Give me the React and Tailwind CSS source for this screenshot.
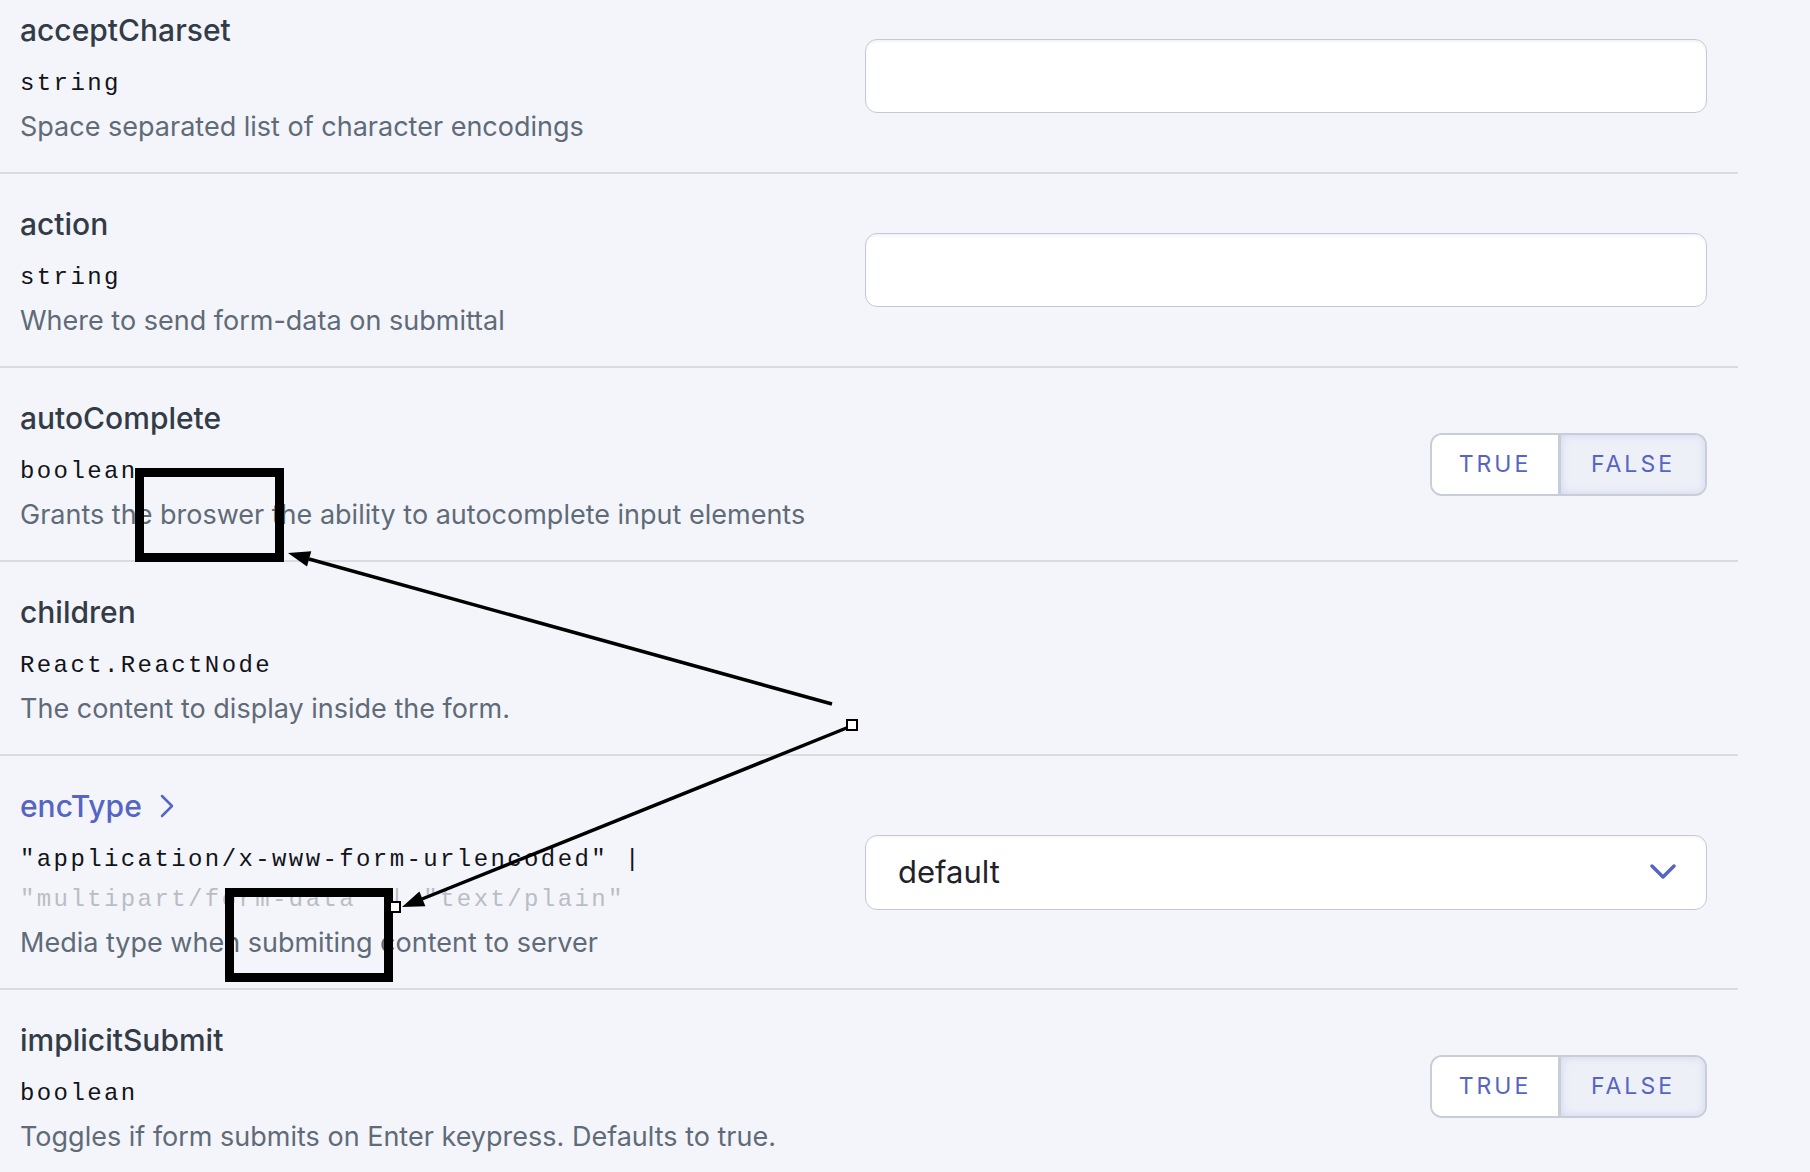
import React from 'react';

const sans = { fontFamily: 'Inter, "Open Sans", sans-serif' };

function TextInput() {
    return (
        <div className="w-full h-[74px] rounded-[12px] border-[1.5px] border-[#c3cad5] bg-white shadow-[inset_0_2px_3px_rgba(0,0,0,0.05)]"></div>
    );
}

function BoolToggle() {
    return (
        <div className="flex h-[63px] rounded-[12px] border-2 border-[#c8ced8] overflow-hidden text-[23px] tracking-[3px] text-[#5664c4]">
            <div className="w-[129px] flex items-center justify-center bg-white border-r-[3px] border-[#c8ced8]">TRUE</div>
            <div className="w-[144px] flex items-center justify-center bg-[#eef0f8] shadow-[inset_0_0_10px_rgba(88,101,198,0.2)]">FALSE</div>
        </div>
    );
}

function SelectBox() {
    return (
        <div className="w-full h-[75px] rounded-[12px] border-[1.5px] border-[#c3cad5] bg-white flex items-center justify-between pl-[32px] pr-[30px] shadow-[inset_0_2px_3px_rgba(0,0,0,0.04)]">
            <span className="text-[31px] text-[#1f2329]">default</span>
            <svg width="26" height="16" viewBox="0 0 26 16" fill="none">
                <path d="M2 2 L13 13 L24 2" stroke="#5664c4" strokeWidth="3.5" strokeLinecap="round" strokeLinejoin="round" />
            </svg>
        </div>
    );
}

function Row({ name, link, type, type2, desc, control }) {
    return (
        <div className="grid grid-cols-[865px_842px] w-[1738px] border-b-2 border-[#d9dbe0]">
            <div className="pl-5 pt-[30px] pb-[25px]">
                {link ? (
                    <div className="h-10 leading-10 text-[30px] font-medium text-[#5664c4] flex items-center gap-[18px]">
                        <span>{name}</span>
                        <svg width="14" height="24" viewBox="0 0 14 24" fill="none">
                            <path d="M2 2 L12 12 L2 22" stroke="#5664c4" strokeWidth="2.5" strokeLinecap="round" strokeLinejoin="round" />
                        </svg>
                    </div>
                ) : (
                    <div className="h-10 leading-10 text-[30px] font-medium text-[#333c46]">{name}</div>
                )}
                <div className="mt-[14px] leading-10 text-[24px] tracking-[2.4px] text-[#111418]" style={{ fontFamily: '"Liberation Mono", monospace' }}>
                    <div>{type}</div>
                    {type2 && <div className="text-[#b9bdc5]">{type2}</div>}
                </div>
                <div className="mt-[3px] leading-10 text-[27px] text-[#5f6b78]">{desc}</div>
            </div>
            <div className="flex items-center justify-end">{control}</div>
        </div>
    );
}

function Annotations() {
    return (
        <svg className="absolute top-0 left-0 pointer-events-none" width="1810" height="1172" viewBox="0 0 1810 1172">
            <rect x="139.5" y="472.5" width="140" height="85" fill="none" stroke="#000" strokeWidth="9" />
            <rect x="229.5" y="892.5" width="159" height="85" fill="none" stroke="#000" strokeWidth="9" />
            <line x1="832" y1="704" x2="309" y2="559" stroke="#000" strokeWidth="3.5" />
            <polygon points="288,553 307,566.6 311.3,551.2" fill="#000" />
            <line x1="849" y1="727" x2="422" y2="899" stroke="#000" strokeWidth="3.5" />
            <polygon points="402,907 425.4,906.2 419.4,891.4" fill="#000" />
            <rect x="847" y="720" width="10" height="10" fill="#fff" stroke="#000" strokeWidth="2" />
            <rect x="390" y="902" width="10" height="10" fill="#fff" stroke="#000" strokeWidth="2" />
        </svg>
    );
}

export default function App() {
    return (
        <div className="relative w-[1810px] h-[1172px] overflow-hidden bg-[#f4f5fa]" style={sans}>
            <div className="mt-[-20px]">
                <Row name="acceptCharset" type="string" desc="Space separated list of character encodings" control={<TextInput />} />
                <Row name="action" type="string" desc="Where to send form-data on submittal" control={<TextInput />} />
                <Row name="autoComplete" type="boolean" desc="Grants the broswer the ability to autocomplete input elements" control={<BoolToggle />} />
                <Row name="children" type="React.ReactNode" desc="The content to display inside the form." />
                <Row
                    name="encType"
                    link
                    type={'"application/x-www-form-urlencoded" |'}
                    type2={'"multipart/form-data" | "text/plain"'}
                    desc="Media type when submiting content to server"
                    control={<SelectBox />}
                />
                <Row name="implicitSubmit" type="boolean" desc="Toggles if form submits on Enter keypress. Defaults to true." control={<BoolToggle />} />
            </div>
            <Annotations />
        </div>
    );
}
